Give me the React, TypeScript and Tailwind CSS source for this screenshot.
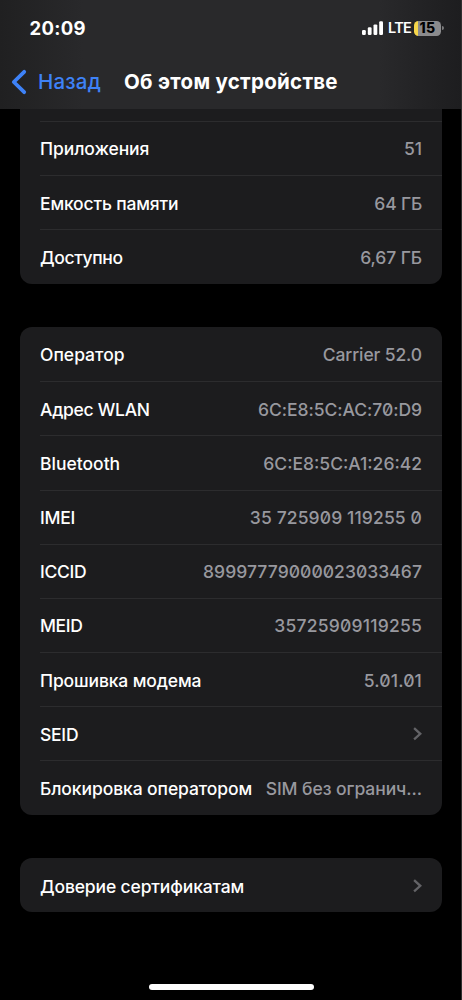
import React from "react";

type RowData = {
  label: string;
  value?: string;
  link?: boolean;
  labelClass?: string;
  valueClass?: string;
};

const storage: RowData[] = [
  { label: "Приложения", value: "51", labelClass: "tracking-[-0.08px]" },
  { label: "Емкость памяти", value: "64 ГБ", labelClass: "tracking-[-0.17px]", valueClass: "tracking-[-0.2px]" },
  { label: "Доступно", value: "6,67 ГБ", labelClass: "tracking-[-0.35px]", valueClass: "tracking-[-0.1px]" },
];

const network: RowData[] = [
  { label: "Оператор", value: "Carrier 52.0", valueClass: "tracking-[-0.12px]" },
  { label: "Адрес WLAN", value: "6C:E8:5C:AC:70:D9", labelClass: "tracking-[-0.28px]", valueClass: "slashed-zero tracking-[-0.05px]" },
  { label: "Bluetooth", value: "6C:E8:5C:A1:26:42", valueClass: "slashed-zero" },
  { label: "IMEI", value: "35 725909 119255 0", labelClass: "tracking-[-0.3px]", valueClass: "slashed-zero tracking-[0.12px]" },
  { label: "ICCID", value: "89997779000023033467", labelClass: "tracking-[-0.3px]", valueClass: "slashed-zero tracking-[0.05px]" },
  { label: "MEID", value: "35725909119255", labelClass: "tracking-[-0.35px]", valueClass: "slashed-zero tracking-[0.22px]" },
  { label: "Прошивка модема", value: "5.01.01", labelClass: "tracking-[-0.13px]", valueClass: "slashed-zero tracking-[0.15px]" },
  { label: "SEID", link: true, labelClass: "tracking-[-0.25px]" },
  { label: "Блокировка оператором", value: "SIM без огранич...", labelClass: "tracking-[-0.09px]", valueClass: "tracking-[-0.07px]" },
];

const certificates: RowData[] = [{ label: "Доверие сертификатам", link: true, labelClass: "tracking-[-0.14px]" }];

function Chevron() {
  return (
    <svg className="mb-[2px] h-[14px] w-[9px]" viewBox="0 0 9 14" fill="none" stroke="#636367" strokeWidth="2.3">
      <path d="M1.1 1.2 L7.3 6.8 L1.1 12.4" />
    </svg>
  );
}

function Row({ row, first }: { row: RowData; first: boolean }) {
  return (
    <div className="h-[54.2px] pl-5">
      <div
        className={`flex h-full items-center justify-between whitespace-nowrap pr-5 ${
          first ? "pt-[3px]" : "border-t border-[#2c2c2e] pt-[2px]"
        }`}
      >
        <span className={`text-white ${row.labelClass ?? ""}`}>{row.label}</span>
        {row.link ? <Chevron /> : <span className={`text-[#98989e] ${row.valueClass ?? ""}`}>{row.value}</span>}
      </div>
    </div>
  );
}

function Group({ rows }: { rows: RowData[] }) {
  return (
    <section className="mx-5 rounded-[12px] bg-[#1c1c1e]">
      {rows.map((row, i) => (
        <Row key={row.label} row={row} first={i === 0} />
      ))}
    </section>
  );
}

function StatusIcons() {
  return (
    <div className="flex items-center">
      <svg className="h-[14px] w-[22px]" viewBox="0 0 22 14" fill="#fff">
        <rect x="0" y="9" width="3.8" height="5" rx="1.2" />
        <rect x="5.8" y="6.3" width="3.8" height="7.7" rx="1.2" />
        <rect x="11.5" y="3.4" width="3.8" height="10.6" rx="1.2" />
        <rect x="17.2" y="0.3" width="3.8" height="13.7" rx="1.2" />
      </svg>
      <span className="ml-[4px] w-[26px] pt-px text-[14.5px] font-semibold leading-none tracking-[-0.7px] text-white">LTE</span>
      <div className="flex h-[15px] w-[27px] items-center justify-center overflow-hidden rounded-[4.5px] bg-[linear-gradient(90deg,#f7d64a_0_4px,#8b8b8d_4px)] text-[14px] font-extrabold leading-none tracking-[0.4px] text-black">
        15
      </div>
      <div className="ml-[1px] h-[4px] w-[2px] rounded-r-full bg-[#7b7b7d]" />
    </div>
  );
}

export default function App() {
  return (
    <div className="relative flex h-[1000px] w-[462px] flex-col overflow-hidden bg-black font-['Inter','Liberation_Sans',sans-serif] text-[17.5px] font-medium">
      <header className="h-[109px] shrink-0 bg-[linear-gradient(90deg,#202021_0%,#29292b_18%,#29292b_82%,#1d1d1f_100%)]">
        <div className="flex h-[56px] items-center justify-between pl-[29.5px] pr-[18px]">
          <span className="text-[18.5px] font-bold leading-none tracking-[0.3px] text-white">20:09</span>
          <StatusIcons />
        </div>
        <div className="flex h-[52px] items-center whitespace-nowrap leading-none">
          <svg className="ml-[11px] h-[26px] w-[16px]" viewBox="0 0 16 26" fill="none" stroke="#3e82f7" strokeWidth="3.8" strokeLinecap="round" strokeLinejoin="round">
            <path d="M13.2 2.8 L2.8 13 L13.2 23.2" />
          </svg>
          <span className="ml-[11px] w-[86px] text-[20.5px] font-medium tracking-[0.2px] text-[#3e82f7]">Назад</span>
          <h1 className="text-[20.5px] font-bold tracking-[0.28px] text-white">Об этом устройстве</h1>
        </div>
      </header>
      <main className="flex flex-col gap-[43.4px]">
        <div>
          <div className="mx-5 h-[12px] bg-[#1c1c1e]" />
          <section className="mx-5 rounded-b-[12px] bg-[#1c1c1e]">
            {storage.map((row) => (
              <Row key={row.label} row={row} first={false} />
            ))}
          </section>
        </div>
        <Group rows={network} />
        <Group rows={certificates} />
      </main>
      <div className="absolute bottom-[10px] left-[148.5px] h-[6px] w-[165px] rounded-full bg-white" />
      <div className="absolute inset-y-0 right-0 w-px bg-[#303030]" />
    </div>
  );
}
